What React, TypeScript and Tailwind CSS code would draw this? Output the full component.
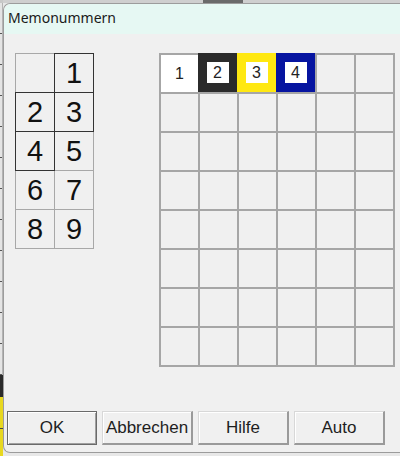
const font = "font-['Liberation_Sans',Arial,sans-serif]";

const leftCells: { label: string; dark: boolean }[] = [
  { label: "", dark: false },
  { label: "1", dark: true },
  { label: "2", dark: true },
  { label: "3", dark: true },
  { label: "4", dark: true },
  { label: "5", dark: false },
  { label: "6", dark: false },
  { label: "7", dark: false },
  { label: "8", dark: false },
  { label: "9", dark: false },
];

function LeftStrip() {
  return (
    <div className="flex w-[3px] flex-col bg-[#e4e4e4]">
      <div className="h-[3px] bg-[#c8c8c8]" />
      <div className="flex flex-col border-r border-[#b4b4b4]">
        {Array.from({ length: 12 }).map((_, i) => (
          <div key={i} className="mt-[30px] h-px w-[2px] bg-[#555]" />
        ))}
      </div>
      <div className="flex-1 border-r border-[#b4b4b4]" />
      <div className="h-[22px] bg-[#2a2a2a]" />
      <div className="flex flex-col bg-[#e8d820]">
        <div className="h-[31px]" />
        <div className="h-px bg-[#444]" />
        <div className="h-[27px]" />
      </div>
    </div>
  );
}

function MemoGrid() {
  return (
    <div className="grid grid-cols-[39px_39px] grid-rows-[repeat(5,39px)]">
      {leftCells.map((cell, i) => (
        <div
          key={i}
          className={`flex h-[40px] w-[40px] items-center justify-center border bg-[#f0f0f0] text-[29px] leading-none text-[#111] ${
            cell.dark ? "relative z-10 border-[#333]" : "border-[#a8a8a8]"
          }`}
        >
          {cell.label}
        </div>
      ))}
    </div>
  );
}

function ColorGrid() {
  const swatches = [
    { n: "1", bg: "white", inner: false },
    { n: "2", bg: "bg-[#2b2b2b]", inner: true },
    { n: "3", bg: "bg-[#ffe811]", inner: true },
    { n: "4", bg: "bg-[#0614a0]", inner: true },
  ];
  return (
    <div className="grid grid-cols-[repeat(6,37px)] grid-rows-[repeat(8,37px)] gap-[2px] border-2 border-[#a6a6a6] bg-[#a6a6a6]">
      {swatches.map((s) =>
        s.inner ? (
          <div key={s.n} className={`-ml-[2px] -mt-[2px] flex items-center justify-center ${s.bg}`}>
            <div className="flex h-[21px] w-[22px] items-center justify-center bg-white text-[16px] leading-none text-[#222]">
              {s.n}
            </div>
          </div>
        ) : (
          <div key={s.n} className="flex items-center justify-center bg-white text-[16px] leading-none text-[#222]">
            {s.n}
          </div>
        ),
      )}
      {Array.from({ length: 44 }).map((_, i) => (
        <div key={i} className="bg-[#f0f0f0]" />
      ))}
    </div>
  );
}

function DialogButton({ label, primary }: { label: string; primary?: boolean }) {
  return (
    <button
      type="button"
      className={`flex h-[34px] items-center justify-center bg-[#f0f0f0] text-[17px] text-[#1e1e1e] ${
        primary
          ? "w-[90px] border border-[#6a6a6a] shadow-[inset_1px_1px_0_#fff,inset_-1px_-1px_0_#a0a0a0]"
          : "w-[91px] border-t border-l border-[#d8d8d8] border-r-2 border-b-2 border-r-[#9a9a9a] border-b-[#9a9a9a] shadow-[inset_1px_1px_0_#fff]"
      }`}
    >
      {label}
    </button>
  );
}

export default function App() {
  return (
    <div className={`flex h-[456px] w-[400px] overflow-hidden bg-[#e8e8e8] ${font}`}>
      <LeftStrip />
      <div className="flex flex-1 flex-col">
        <div className="flex h-[3px]">
          <div className="w-[200px] bg-[#cfcfcf]" />
          <div className="w-[40px] bg-[#6a6a6a]" />
          <div className="flex-1 bg-[#cfcfcf]" />
        </div>
        <div className="flex flex-1 flex-col rounded-l-[7px] border-y border-l border-[#9c9c9c] bg-[#f0f0f0]">
          <div className="flex h-[30px] items-center rounded-tl-[7px] bg-[#e6f8f3] pb-[3px] pl-[4px] font-['Noto_Sans',sans-serif] text-[14px] text-[#1a1a1a]">
            Memonummern
          </div>
          <div className="flex pl-[11px] pt-[19px]">
            <MemoGrid />
            <div className="ml-[66px]">
              <ColorGrid />
            </div>
          </div>
          <div className="mt-[44px] flex gap-[5px] pl-[3px]">
            <DialogButton label="OK" primary />
            <DialogButton label="Abbrechen" />
            <DialogButton label="Hilfe" />
            <DialogButton label="Auto" />
          </div>
        </div>
        <div className="h-[3px]" />
      </div>
    </div>
  );
}
